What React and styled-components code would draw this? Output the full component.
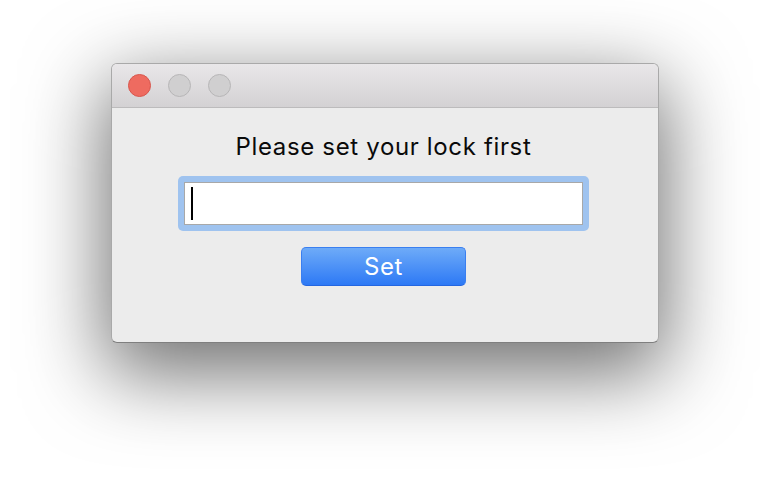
import React from 'react'
import styled, {createGlobalStyle} from 'styled-components'

const GlobalStyle = createGlobalStyle`
  *{
    box-sizing:border-box;
  }
  body{
    margin:0;
    background:#ffffff;
    font-family:Inter, "Liberation Sans", sans-serif;
  }
`

const Page = styled.main`
  width:770px;
  height:502px;
  padding:63px 0 0 111px;
  overflow:hidden;
`

const Window = styled.section`
  width:548px;
  height:280px;
  display:flex;
  flex-direction:column;
  background:#ececec;
  border:1px solid #a9a9a9;
  border-bottom-color:#7f7f7f;
  border-radius:6px;
  overflow:hidden;
  box-shadow:0 25px 80px 6px rgba(0,0,0,0.56);
`

const TitleBar = styled.header`
  height:44px;
  flex:none;
  display:flex;
  align-items:center;
  gap:17px;
  padding-left:16px;
  background:linear-gradient(#e9e7e9, #d3d1d3);
  border-bottom:1px solid #bcbbbc;
`

const Light = styled.span`
  width:23px;
  height:23px;
  border-radius:50%;
  background:${p => p.$color};
  border:1px solid ${p => p.$edge};
`

const Content = styled.div`
  flex:1;
  display:flex;
  flex-direction:column;
  align-items:center;
  padding:25px 3px 0 0;
`

const Prompt = styled.h1`
  margin:0;
  font-size:24px;
  line-height:28px;
  letter-spacing:0.65px;
  font-weight:400;
  color:#0a0a0a;
`

const FocusRing = styled.div`
  margin-top:15px;
  padding:6px;
  border-radius:5px;
  background:#9fc3ef;
`

const Field = styled.div`
  width:399px;
  height:43px;
  display:flex;
  align-items:center;
  padding-left:6px;
  background:#fff;
  border:1px solid #a8a8a8;
`

const Caret = styled.span`
  width:2px;
  height:33px;
  background:#000;
`

const SetButton = styled.button`
  margin-top:16px;
  width:165px;
  height:39px;
  border-radius:5px;
  border:1px solid #3a7ff0;
  border-bottom-color:#2466e0;
  background:linear-gradient(#6eabf8, #2d79f5);
  color:#fff;
  font-family:Inter, "Liberation Sans", sans-serif;
  font-size:24px;
  letter-spacing:0.65px;
  line-height:1;
  padding:0;
`

const App = () => {
  return (
    <Page>
      <GlobalStyle/>
      <Window>
        <TitleBar>
          <Light $color="#ee6b60" $edge="#d8564d"/>
          <Light $color="#d0cfd0" $edge="#b7b6b7"/>
          <Light $color="#d0cfd0" $edge="#b7b6b7"/>
        </TitleBar>
        <Content>
          <Prompt>Please set your lock first</Prompt>
          <FocusRing>
            <Field>
              <Caret/>
            </Field>
          </FocusRing>
          <SetButton>Set</SetButton>
        </Content>
      </Window>
    </Page>
  )
}

export default App
